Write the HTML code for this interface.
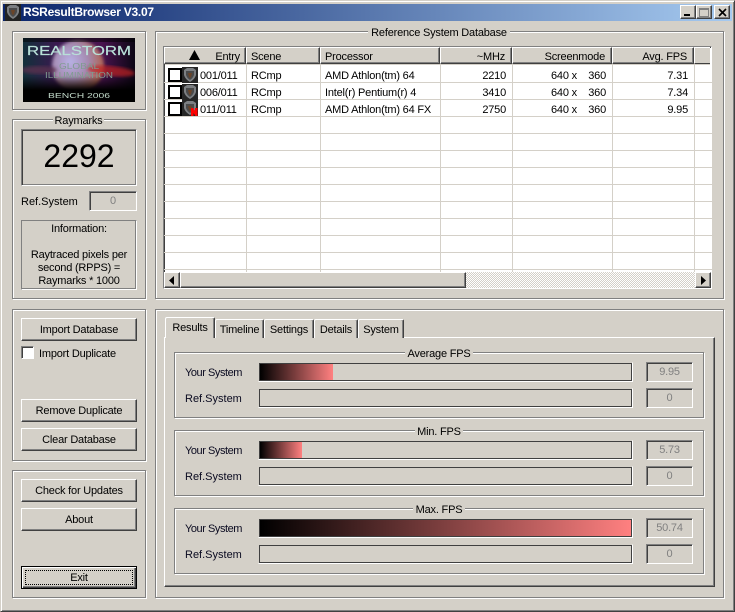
<!DOCTYPE html>
<html><head><meta charset="utf-8"><title>RSResultBrowser V3.07</title>
<style>
html,body{margin:0;padding:0;background:#d4d0c8}
body{width:735px;height:612px;position:relative;overflow:hidden;font:11px/16px "Liberation Sans",sans-serif;letter-spacing:-.2px;color:#000}
div,span,svg{position:absolute;box-sizing:border-box;white-space:nowrap}
svg{letter-spacing:0}
.g{border:1px solid #808080;box-shadow:inset 1px 1px #fff,1px 1px #fff}
.cap{background:#d4d0c8;text-align:center;padding:0 3px}
.btn{left:21px;width:116px;background:#d4d0c8;border:1px solid;border-color:#fff #404040 #404040 #fff;box-shadow:inset -1px -1px #808080;text-align:center}
.bar{left:258px;width:375px;height:20px;border:1px solid;border-color:#d4d0c8 #fff #fff #d4d0c8}
.bar i{position:absolute;left:0;right:0;top:0;bottom:0;border:1px solid #404040;display:block}
.bar b{position:absolute;left:1px;top:1px;bottom:1px;display:block;background:linear-gradient(90deg,#000,#ff8080)}
.val{left:646px;width:47px;height:20px;border:1px solid;border-color:#808080 #fff #fff #808080;box-shadow:inset 1px 1px #404040;color:#808080;text-align:center;line-height:19px}
.l{left:185px;color:#0a0a20}
.y{letter-spacing:-.45px}
.f{letter-spacing:0}
.h{top:47px;height:17px;background:#d4d0c8;border:1px solid;border-color:#fff #404040 #404040 #fff;box-shadow:inset -1px -1px #808080;line-height:18px;padding:0 6px 0 4px}
.hl{left:0;width:548px;height:1px;background:#d4d0c8}
.vl{top:65px;width:1px;height:207px;background:#d4d0c8}
.c{height:14px}
.r{text-align:right}
.cb{left:168px;width:14px;height:14px;border:2px solid #000;background:#fff}
.ic{left:182px;width:16px;height:16px}
.t{top:319px;height:19px;background:#d4d0c8;border:1px solid;border-bottom:0;border-color:#fff #404040 #d4d0c8 #fff;border-radius:2px 2px 0 0;box-shadow:inset -1px 0 #808080;text-align:center;line-height:20px}
.sb{width:16px;height:16px;background:#d4d0c8;border:1px solid;border-color:#fff #404040 #404040 #fff;box-shadow:inset -1px -1px #808080}
</style></head><body>
<!-- window frame -->
<div style="left:0;top:0;width:735px;height:612px;border:1px solid;border-color:#d4d0c8 #404040 #404040 #d4d0c8;box-shadow:inset 1px 1px #fff,inset -1px -1px #808080"></div>
<div style="left:3px;top:4px;width:729px;height:17px;background:linear-gradient(90deg,#0a246a,#a6caf0)"></div>
<svg style="left:5px;top:4px" width="16" height="17" viewBox="0 0 16 17"><rect width="16" height="17" fill="#222"/><path d="M2 3 L5 1 H11 L14 3 V8 Q13 12 8 15 Q3 12 2 8Z" fill="#7c7f82"/><path d="M4 4 H12 V8 Q11 11 8 13 Q5 11 4 8Z" fill="#4a4a4a"/><path d="M6 6 L10 6 L9 10 L8 11 L7 10Z" fill="#6a4428"/></svg>
<div style="left:23px;top:5px;color:#fff;font-weight:bold;font-size:12px;letter-spacing:-.25px;line-height:15px">RSResultBrowser V3.07</div>
<div class="sb" style="left:680px;top:5px;height:14px;width:16px"><div style="left:3px;top:8px;width:6px;height:2px;background:#000"></div></div>
<div class="sb" style="left:696px;top:5px;height:14px;width:16px"><div style="left:2px;top:2px;width:10px;height:9px;border:1px solid #808080;border-top-width:2px"></div></div>
<div class="sb" style="left:714px;top:5px;height:14px;width:16px"><svg style="left:3px;top:2px" width="9" height="9" viewBox="0 0 9 9"><path d="M1 1 L8 8 M8 1 L1 8" stroke="#000" stroke-width="1.6"/></svg></div>

<!-- logo group -->
<div class="g" style="left:12px;top:31px;width:134px;height:79px"></div>
<svg style="left:23px;top:38px" width="112" height="64" viewBox="0 0 112 64">
<defs>
<linearGradient id="bg" x1="0" y1="0" x2="1" y2="0"><stop offset="0" stop-color="#12303a"/><stop offset=".3" stop-color="#3a1a50"/><stop offset=".7" stop-color="#4a1450"/><stop offset="1" stop-color="#0c0614"/></linearGradient>
<radialGradient id="pl" cx=".35" cy=".42" r=".7"><stop offset="0" stop-color="#b8b2e6"/><stop offset=".5" stop-color="#a48ab0"/><stop offset="1" stop-color="#b05a3c"/></radialGradient>
<linearGradient id="fade" x1="0" y1="0" x2="0" y2="1"><stop offset="0" stop-color="#000" stop-opacity="0"/><stop offset="1" stop-color="#000"/></linearGradient>
<filter id="bl"><feGaussianBlur stdDeviation="1.5"/></filter>
<filter id="bt"><feGaussianBlur stdDeviation=".25"/></filter>
</defs>
<rect width="112" height="64" fill="url(#bg)"/>
<circle cx="55" cy="28" r="26" fill="url(#pl)" filter="url(#bl)"/>
<ellipse cx="88" cy="33" rx="24" ry="5" fill="#c02020" opacity=".7" filter="url(#bl)" transform="rotate(6 88 33)"/>
<ellipse cx="16" cy="32" rx="18" ry="4" fill="#5a3050" opacity=".8" filter="url(#bl)"/>
<rect y="38" width="112" height="14" fill="url(#fade)"/>
<rect y="52" width="112" height="12" fill="#000"/>
<rect x="0" y="0" width="112" height="4" fill="#000" opacity=".5"/>
<g font-family="Liberation Sans,sans-serif" text-anchor="middle" filter="url(#bt)">
<text x="56" y="17" font-size="12.5" textLength="104" lengthAdjust="spacingAndGlyphs" fill="#b8e0d8" stroke="#b8e0d8" stroke-width=".2">REALSTORM</text>
<text x="56" y="31" font-size="8" textLength="40" lengthAdjust="spacingAndGlyphs" fill="#7f9c90">GLOBAL</text>
<text x="56" y="40" font-size="8" textLength="68" lengthAdjust="spacingAndGlyphs" fill="#7f9c90">ILLUMINATION</text>
<text x="56" y="60" font-size="7.5" textLength="62" lengthAdjust="spacingAndGlyphs" fill="#c0d8c8">BENCH 2006</text>
</g></svg>

<!-- raymarks -->
<div class="g" style="left:12px;top:119px;width:134px;height:180px"></div>
<div class="cap" style="left:53px;top:113px;width:51px;padding:0">Raymarks</div>
<div style="left:21px;top:129px;width:116px;height:57px;border:1px solid;border-color:#808080 #fff #fff #808080;box-shadow:inset 1px 1px #404040,inset -1px -1px #808080;text-align:center;font-size:32px;letter-spacing:0;line-height:53px">2292</div>
<div class="f" style="left:21px;top:194px">Ref.System</div>
<div class="val" style="left:89px;top:191px;width:48px;height:20px">0</div>
<div style="left:21px;top:220px;width:116px;height:70px;border:1px solid;border-color:#808080 #fff #fff #808080;text-align:center;line-height:13px;white-space:normal;box-shadow:inset -1px -1px #808080"><div style="left:0;top:2px;width:114px;text-align:center">Information:</div><div style="left:0;top:28px;width:114px;text-align:center">Raytraced pixels per</div><div style="left:0;top:41px;width:114px;text-align:center">second (RPPS) =</div><div style="left:0;top:54px;width:114px;text-align:center">Raymarks * 1000</div></div>

<!-- db buttons -->
<div class="g" style="left:12px;top:309px;width:134px;height:152px"></div>
<div class="btn" style="top:318px;height:23px;line-height:22px">Import Database</div>
<div style="left:21px;top:346px;width:13px;height:13px;background:#fff;border:1px solid;border-color:#808080 #fff #fff #808080;box-shadow:inset 1px 1px #404040"></div>
<div style="left:39px;top:346px">Import Duplicate</div>
<div class="btn" style="top:399px;height:23px;line-height:22px">Remove Duplicate</div>
<div class="btn" style="top:428px;height:23px;line-height:22px">Clear Database</div>

<!-- bottom buttons -->
<div class="g" style="left:12px;top:470px;width:134px;height:128px"></div>
<div class="btn" style="top:479px;height:23px;line-height:22px">Check for Updates</div>
<div class="btn" style="top:508px;height:23px;line-height:22px">About</div>
<div class="btn" style="top:566px;height:23px;line-height:22px;border:1px solid #000;box-shadow:inset 1px 1px #fff,inset -1px -1px #404040,inset -2px -2px #808080">Exit<div style="left:3px;top:3px;width:108px;height:15px;border:1px dotted #000"></div></div>

<!-- database group -->
<div class="g" style="left:155px;top:31px;width:569px;height:268px"></div>
<div class="cap" style="left:368px;top:25px;width:142px">Reference System Database</div>
<div style="left:163px;top:46px;width:549px;height:243px;border:1px solid;border-color:#808080 #fff #fff #808080;box-shadow:inset 1px 1px #404040;background:#fff;overflow:hidden"></div>
<div style="left:165px;top:47px;width:545px;height:18px;background:#d4d0c8"></div>
<div class="h" style="left:164px;width:82px"><svg style="left:24px;top:2px" width="11" height="10" viewBox="0 0 11 10"><path d="M5.5 0 L11 10 H0Z" fill="#000"/></svg><span style="right:5px;top:0">Entry</span></div>
<div class="h" style="left:246px;width:74px">Scene</div>
<div class="h" style="left:320px;width:120px">Processor</div>
<div class="h r" style="left:440px;width:72px">~MHz</div>
<div class="h r" style="left:512px;width:100px">Screenmode</div>
<div class="h r" style="left:612px;width:82px">Avg. FPS</div>
<div class="h" style="left:694px;width:16px;border-right:0;box-shadow:none"></div>

<div style="left:164px;top:0;width:548px;height:272px">
<div class="hl" style="top:82px"></div><div class="hl" style="top:99px"></div><div class="hl" style="top:116px"></div><div class="hl" style="top:133px"></div><div class="hl" style="top:150px"></div><div class="hl" style="top:167px"></div><div class="hl" style="top:184px"></div><div class="hl" style="top:201px"></div><div class="hl" style="top:218px"></div><div class="hl" style="top:235px"></div><div class="hl" style="top:252px"></div><div class="hl" style="top:269px"></div>
<div class="vl" style="left:82px"></div><div class="vl" style="left:156px"></div><div class="vl" style="left:276px"></div><div class="vl" style="left:348px"></div><div class="vl" style="left:448px"></div><div class="vl" style="left:530px"></div>
</div>

<!-- rows -->
<div class="cb" style="top:68px"></div>
<svg class="ic" style="top:67px" viewBox="0 0 16 16"><rect width="16" height="16" fill="#262626"/><path d="M2 3 L5 1 H11 L14 3 V8 Q13 12 8 15 Q3 12 2 8Z" fill="#7c7f82"/><path d="M4 4 H12 V8 Q11 11 8 13 Q5 11 4 8Z" fill="#4a4a4a"/><path d="M6 6 L10 6 L9 10 L8 11 L7 10Z" fill="#6a4428"/></svg>
<div class="c" style="left:200px;top:68px">001/011</div><div class="c" style="left:251px;top:68px">RCmp</div><div class="c" style="left:325px;top:68px">AMD Athlon(tm) 64</div><div class="c r" style="left:441px;top:68px;width:65px">2210</div><div class="c" style="left:551px;top:68px">640 x</div><div class="c r" style="left:580px;top:68px;width:26px">360</div><div class="c r" style="left:620px;top:68px;width:68px">7.31</div>

<div class="cb" style="top:85px"></div>
<svg class="ic" style="top:84px" viewBox="0 0 16 16"><rect width="16" height="16" fill="#262626"/><path d="M2 3 L5 1 H11 L14 3 V8 Q13 12 8 15 Q3 12 2 8Z" fill="#7c7f82"/><path d="M4 4 H12 V8 Q11 11 8 13 Q5 11 4 8Z" fill="#4a4a4a"/><path d="M6 6 L10 6 L9 10 L8 11 L7 10Z" fill="#6a4428"/></svg>
<div class="c" style="left:200px;top:85px">006/011</div><div class="c" style="left:251px;top:85px">RCmp</div><div class="c" style="left:325px;top:85px">Intel(r) Pentium(r) 4</div><div class="c r" style="left:441px;top:85px;width:65px">3410</div><div class="c" style="left:551px;top:85px">640 x</div><div class="c r" style="left:580px;top:85px;width:26px">360</div><div class="c r" style="left:620px;top:85px;width:68px">7.34</div>

<div class="cb" style="top:102px"></div>
<svg class="ic" style="top:100px" viewBox="0 0 16 16"><rect width="16" height="16" fill="#262626"/><path d="M2 3 L5 1 H11 L14 3 V8 Q13 12 8 15 Q3 12 2 8Z" fill="#7c7f82"/><path d="M4 4 H12 V8 Q11 11 8 13 Q5 11 4 8Z" fill="#4a4a4a"/><path d="M6 6 L10 6 L9 10 L8 11 L7 10Z" fill="#6a4428"/><path d="M9 16 V8 H11 L13 11 V8 H15.5 V16 H13.5 L11.5 13 V16Z" fill="#f00"/></svg>
<div class="c" style="left:200px;top:102px">011/011</div><div class="c" style="left:251px;top:102px">RCmp</div><div class="c" style="left:325px;top:102px">AMD Athlon(tm) 64 FX</div><div class="c r" style="left:441px;top:102px;width:65px">2750</div><div class="c" style="left:551px;top:102px">640 x</div><div class="c r" style="left:580px;top:102px;width:26px">360</div><div class="c r" style="left:620px;top:102px;width:68px">9.95</div>

<!-- h-scrollbar -->
<div style="left:165px;top:272px;width:545px;height:16px;background:conic-gradient(#fff 25%,#d4d0c8 0 50%,#fff 0 75%,#d4d0c8 0) 0 0/2px 2px"></div>
<div class="sb" style="left:164px;top:272px"><svg style="left:4px;top:3px" width="5" height="9" viewBox="0 0 5 9"><path d="M5 0 V9 L0 4.5Z" fill="#000"/></svg></div>
<div class="sb" style="left:180px;top:272px;width:286px"></div>
<div class="sb" style="left:695px;top:272px"><svg style="left:5px;top:3px" width="5" height="9" viewBox="0 0 5 9"><path d="M0 0 V9 L5 4.5Z" fill="#000"/></svg></div>

<!-- results group -->
<div class="g" style="left:155px;top:309px;width:569px;height:289px"></div>
<div style="left:164px;top:337px;width:551px;height:250px;border:1px solid;border-color:#fff #404040 #404040 #fff;box-shadow:inset -1px -1px #808080"></div>
<div class="t" style="left:215px;width:49px">Timeline</div>
<div class="t" style="left:264px;width:50px">Settings</div>
<div class="t" style="left:314px;width:44px">Details</div>
<div class="t" style="left:358px;width:46px">System</div>
<div class="t" style="left:165px;top:317px;width:50px;height:21px;line-height:20px">Results</div>

<!-- Average -->
<div class="g" style="left:174px;top:352px;width:530px;height:66px"></div>
<div class="cap" style="left:405px;top:346px;width:68px;padding:0">Average FPS</div>
<div class="l y" style="top:365px">Your System</div><div class="l f" style="top:391px">Ref.System</div>
<div class="bar" style="top:362px"><b style="width:73px"></b><i></i></div>
<div class="bar" style="top:388px"><i></i></div>
<div class="val" style="top:362px">9.95</div><div class="val" style="top:388px">0</div>

<!-- Min -->
<div class="g" style="left:174px;top:430px;width:530px;height:66px"></div>
<div class="cap" style="left:415px;top:424px;width:48px;padding:0">Min. FPS</div>
<div class="l y" style="top:443px">Your System</div><div class="l f" style="top:469px">Ref.System</div>
<div class="bar" style="top:440px"><b style="width:42px"></b><i></i></div>
<div class="bar" style="top:466px"><i></i></div>
<div class="val" style="top:440px">5.73</div><div class="val" style="top:466px">0</div>

<!-- Max -->
<div class="g" style="left:174px;top:508px;width:530px;height:66px"></div>
<div class="cap" style="left:413px;top:502px;width:52px;padding:0">Max. FPS</div>
<div class="l y" style="top:521px">Your System</div><div class="l f" style="top:547px">Ref.System</div>
<div class="bar" style="top:518px"><b style="right:1px"></b><i></i></div>
<div class="bar" style="top:544px"><i></i></div>
<div class="val" style="top:518px">50.74</div><div class="val" style="top:544px">0</div>
</body></html>
